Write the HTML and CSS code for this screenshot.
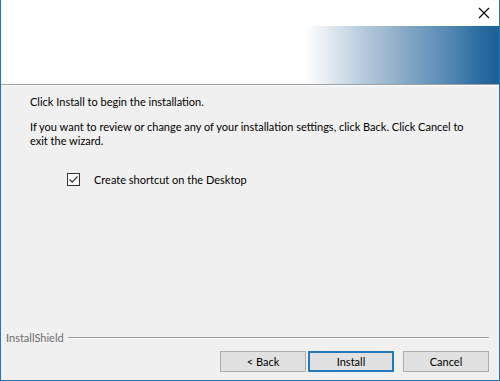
FILE: index.html
```html
<!DOCTYPE html>
<html>
<head>
<meta charset="utf-8">
<link rel="stylesheet" href="styles.css">
</head>
<body>
<div class="window">
  <div class="titlebar">
    <svg class="close" width="12" height="12" viewBox="0 0 12 12"><path d="M1 1 L11 11 M11 1 L1 11" stroke="#000" stroke-width="1.1" fill="none"/></svg>
  </div>
  <div class="banner">
    <div class="banner-fade"></div>
  </div>
  <div class="content">
    <p class="line1">Click Install to begin the installation.</p>
    <p class="para">If you want to review or change any of your installation settings, click Back. Click Cancel to exit the wizard.</p>
    <label class="check">
      <span class="box"><svg width="11" height="11" viewBox="0 0 11 11"><path d="M1.5 5.5 L4.2 8.2 L9.5 2.5" stroke="#333" stroke-width="1.2" fill="none"/></svg></span>
      <span class="check-label">Create shortcut on the Desktop</span>
    </label>
  </div>
  <div class="footer">
    <div class="brand"><span class="brand-name">InstallShield</span><span class="etch"></span></div>
    <div class="buttons">
      <button class="btn">&lt; Back</button>
      <button class="btn default">Install</button>
      <button class="btn cancel">Cancel</button>
    </div>
  </div>
</div>
</body>
</html>
```
FILE: styles.css
```css
html, body {
  margin: 0;
  padding: 0;
  background: #ffffff;
}
body {
  width: 500px;
  height: 381px;
  overflow: hidden;
  font-family: Lato, "Noto Sans", sans-serif;
  font-size: 11px;
  color: #000;
}
.window {
  box-sizing: border-box;
  width: 500px;
  height: 381px;
  border-left: 1px solid #2475b4;
  border-right: 1px solid #2475b4;
  border-bottom: 1px solid #2475b4;
  display: flex;
  flex-direction: column;
  background: #f0f0f0;
}
.titlebar {
  height: 26px;
  background: #fff;
  display: flex;
  justify-content: flex-end;
  align-items: center;
  padding-right: 9px;
}
.close {
  display: block;
  margin-top: -1px;
}
.banner {
  height: 58px;
  background: #fff;
  display: flex;
  justify-content: flex-end;
  border-bottom: 1px solid #a0a0a0;
}
.banner-fade {
  width: 194px;
  height: 100%;
  background: linear-gradient(to right, #ffffff 0%, #e3ebf2 12%, #b6cbdc 30%, #86a8c6 52%, #5488b3 74%, #2b6c9f 90%, #1c5f96 100%);
}
.content {
  flex: 1;
  border-top: 1px solid #ffffff;
  padding: 9px 0 0 29px;
}
.content p {
  margin: 0;
  line-height: 14px;
}
.line1 {
  margin-bottom: 11px !important;
}
.para {
  width: 440px;
}
.check {
  display: flex;
  align-items: center;
  margin: 25px 0 0 37px;
}
.box {
  box-sizing: border-box;
  width: 13px;
  height: 13px;
  border: 1px solid #333;
  background: #fff;
  display: flex;
  align-items: center;
  justify-content: center;
}
.box svg { display: block; }
.check-label {
  margin-left: 14px;
}
.footer {
  padding: 0 10px 8px 5px;
}
.brand {
  display: flex;
  align-items: center;
  color: #6d6d6d;
  height: 14px;
}
.etch {
  flex: 1;
  height: 1px;
  background: #a0a0a0;
  border-bottom: 1px solid #fff;
  margin-left: 4px;
  margin-top: 1px;
}
.buttons {
  display: flex;
  justify-content: flex-end;
  margin-top: 7px;
}
.btn {
  box-sizing: border-box;
  width: 86px;
  height: 21px;
  margin: 0 0 0 2px;
  padding: 0;
  background: #e1e1e1;
  border: 1px solid #adadad;
  font-family: inherit;
  font-size: 11px;
  color: #000;
  line-height: 17px;
}
.btn.default {
  border: 2px solid #2778b8;
}
.btn.cancel {
  margin-left: 9px;
}
```
